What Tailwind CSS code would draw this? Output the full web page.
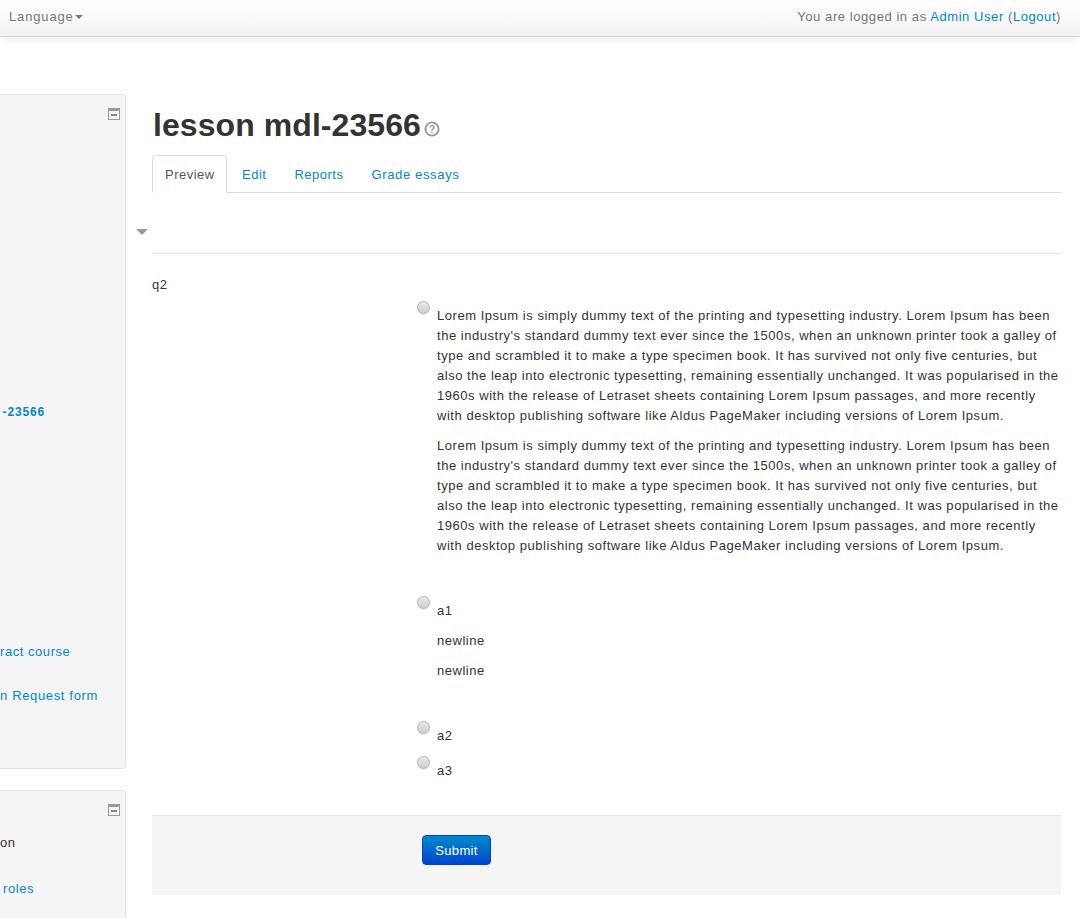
<!DOCTYPE html>
<html lang="en">
<head>
    <meta charset="UTF-8">
    <meta name="viewport" content="width=device-width, initial-scale=1.0">
    <title>lesson mdl-23566</title>
    <script src="https://cdn.jsdelivr.net/npm/@tailwindcss/browser@4"></script>
</head>
<body class="bg-white h-[918px] overflow-hidden font-['Liberation_Sans',Arial,sans-serif] text-[13px] leading-5 tracking-[0.53px] text-[#333]">
    <!-- top navbar -->
    <div class="h-[37px] flex items-center justify-between pl-[9px] pr-[19px] pb-[2px] border-b border-[#d4d4d4] bg-gradient-to-b from-white to-[#f2f2f2] shadow-[0_1px_10px_rgba(0,0,0,0.1)] tracking-[0.57px] text-[#777]">
        <div class="flex items-center">
            <span class="tracking-[0.85px]">Language</span>
            <span class="ml-[1px] w-0 h-0 border-x-4 border-x-transparent border-t-4 border-t-[#777]"></span>
        </div>
        <div>You are logged in as <a href="#" class="text-[#0088cc]">Admin User</a> (<a href="#" class="text-[#0088cc]">Logout</a>)</div>
    </div>

    <div class="flex">
        <!-- side blocks, cut off by the window's left edge -->
        <div class="w-[126px] shrink-0 pt-[57px]">
            <div class="relative h-[675px] bg-[#f5f5f5] border border-l-0 border-[#e3e3e3] rounded-r-[4px] overflow-hidden">
                <svg class="absolute left-[108px] top-[13px]" width="12" height="12" viewBox="0 0 12 12"><rect x="0.5" y="0.5" width="11" height="11" fill="#f5f5f5" stroke="#999"/><rect x="0" y="0" width="12" height="3" fill="#999"/><rect x="3" y="6" width="6" height="2" fill="#888"/></svg>
                <div class="pt-[307px] flex flex-col items-end pr-[80px] whitespace-nowrap">
                    <a href="#" class="font-bold text-[12px] tracking-[0.85px] text-[#0088cc]">-23566</a>
                </div>
                <div class="absolute top-[547px] left-0 tracking-[0.55px] text-[#0088cc] whitespace-nowrap">ract course</div>
                <div class="absolute top-[591px] left-0 tracking-[0.65px] text-[#0088cc] whitespace-nowrap">n Request form</div>
            </div>
            <div class="relative mt-[21px] h-[140px] bg-[#f5f5f5] border border-l-0 border-[#e3e3e3] rounded-r-[4px]">
                <svg class="absolute left-[108px] top-[13px]" width="12" height="12" viewBox="0 0 12 12"><rect x="0.5" y="0.5" width="11" height="11" fill="#f5f5f5" stroke="#999"/><rect x="0" y="0" width="12" height="3" fill="#999"/><rect x="3" y="6" width="6" height="2" fill="#888"/></svg>
                <div class="absolute top-[42px] left-0">on</div>
                <a href="#" class="absolute top-[88px] left-[3px] tracking-[0.6px] text-[#0088cc]">roles</a>
            </div>
        </div>

        <!-- main column -->
        <div class="relative ml-[26px] w-[909px] shrink-0 pt-[68px]">
            <h1 class="flex items-center pl-[1px] text-[32px] tracking-[0.07px] leading-[40px] font-bold text-[#333] h-[40px]">
                lesson mdl-23566
                <svg class="ml-[3px] mt-[8px]" width="16" height="16" viewBox="0 0 16 16"><circle cx="8" cy="8" r="6.6" fill="none" stroke="#999" stroke-width="1.9"/><text x="8" y="11.6" text-anchor="middle" font-size="10" font-weight="700" font-family="Liberation Sans" fill="#999">?</text></svg>
            </h1>

            <ul class="mt-[10px] flex h-[38px] border-b border-[#ddd] tracking-[0.5px]">
                <li class="w-[75px] h-[38px] pl-[12px] pt-[9px] bg-white border border-[#ddd] border-b-white rounded-t-[4px] text-[#555]">Preview</li>
                <li class="pl-[15px] pr-[14px] pt-[10px] text-[#0088cc]">Edit</li>
                <li class="pl-[14px] pr-[14px] pt-[10px] text-[#0088cc]">Reports</li>
                <li class="pl-[14px] pt-[10px] text-[#0088cc] tracking-[0.65px]">Grade essays</li>
            </ul>

            <span class="absolute left-[-16px] top-[192px] w-0 h-0 border-x-[6px] border-x-transparent border-t-[6px] border-t-[#999]"></span>

            <div class="mt-[60px] border-t border-[#e5e5e5]"></div>

            <p class="mt-[21px]">q2</p>

            <!-- answers -->
            <div class="pl-[265px]">
                <div class="flex items-start">
                    <span class="mt-[6px] w-[13px] h-[13px] shrink-0 rounded-full border border-[#b5b5b5] bg-gradient-to-b from-[#e8e8e8] to-[#cfcfcf] shadow-[0_1px_1px_rgba(0,0,0,0.1)]"></span>
                    <div class="ml-[7px] pt-[11px]">
                        <p class="mb-[10px]">Lorem Ipsum is simply dummy text of the printing and typesetting industry. Lorem Ipsum has been the industry's standard dummy text ever since the 1500s, when an unknown printer took a galley of type and scrambled it to make a type specimen book. It has survived not only five centuries, but also the leap into electronic typesetting, remaining essentially unchanged. It was popularised in the 1960s with the release of Letraset sheets containing Lorem Ipsum passages, and more recently with desktop publishing software like Aldus PageMaker including versions of Lorem Ipsum.</p>
                        <p>Lorem Ipsum is simply dummy text of the printing and typesetting industry. Lorem Ipsum has been the industry's standard dummy text ever since the 1500s, when an unknown printer took a galley of type and scrambled it to make a type specimen book. It has survived not only five centuries, but also the leap into electronic typesetting, remaining essentially unchanged. It was popularised in the 1960s with the release of Letraset sheets containing Lorem Ipsum passages, and more recently with desktop publishing software like Aldus PageMaker including versions of Lorem Ipsum.</p>
                    </div>
                </div>
                <div class="mt-[34px] flex items-start">
                    <span class="mt-[6px] w-[13px] h-[13px] shrink-0 rounded-full border border-[#b5b5b5] bg-gradient-to-b from-[#e8e8e8] to-[#cfcfcf] shadow-[0_1px_1px_rgba(0,0,0,0.1)]"></span>
                    <div class="ml-[7px] pt-[11px] flex flex-col gap-[10px]">
                        <p>a1</p>
                        <p>newline</p>
                        <p>newline</p>
                    </div>
                </div>
                <div class="mt-[34px] flex items-start">
                    <span class="mt-[6px] w-[13px] h-[13px] shrink-0 rounded-full border border-[#b5b5b5] bg-gradient-to-b from-[#e8e8e8] to-[#cfcfcf] shadow-[0_1px_1px_rgba(0,0,0,0.1)]"></span>
                    <p class="ml-[7px] pt-[11px]">a2</p>
                </div>
                <div class="mt-[4px] flex items-start">
                    <span class="mt-[6px] w-[13px] h-[13px] shrink-0 rounded-full border border-[#b5b5b5] bg-gradient-to-b from-[#e8e8e8] to-[#cfcfcf] shadow-[0_1px_1px_rgba(0,0,0,0.1)]"></span>
                    <p class="ml-[7px] pt-[11px]">a3</p>
                </div>
            </div>

            <!-- submit bar -->
            <div class="mt-[34px] h-[80px] pt-[19px] pl-[270px] bg-[#f5f5f5] border-t border-[#e5e5e5]">
                <button class="w-[69px] h-[30px] pt-[1px] rounded-[4px] border border-[#0044cc] bg-gradient-to-b from-[#0088cc] to-[#0044cc] text-white text-[13px] tracking-[0.3px]">Submit</button>
            </div>
        </div>
    </div>
</body>
</html>
